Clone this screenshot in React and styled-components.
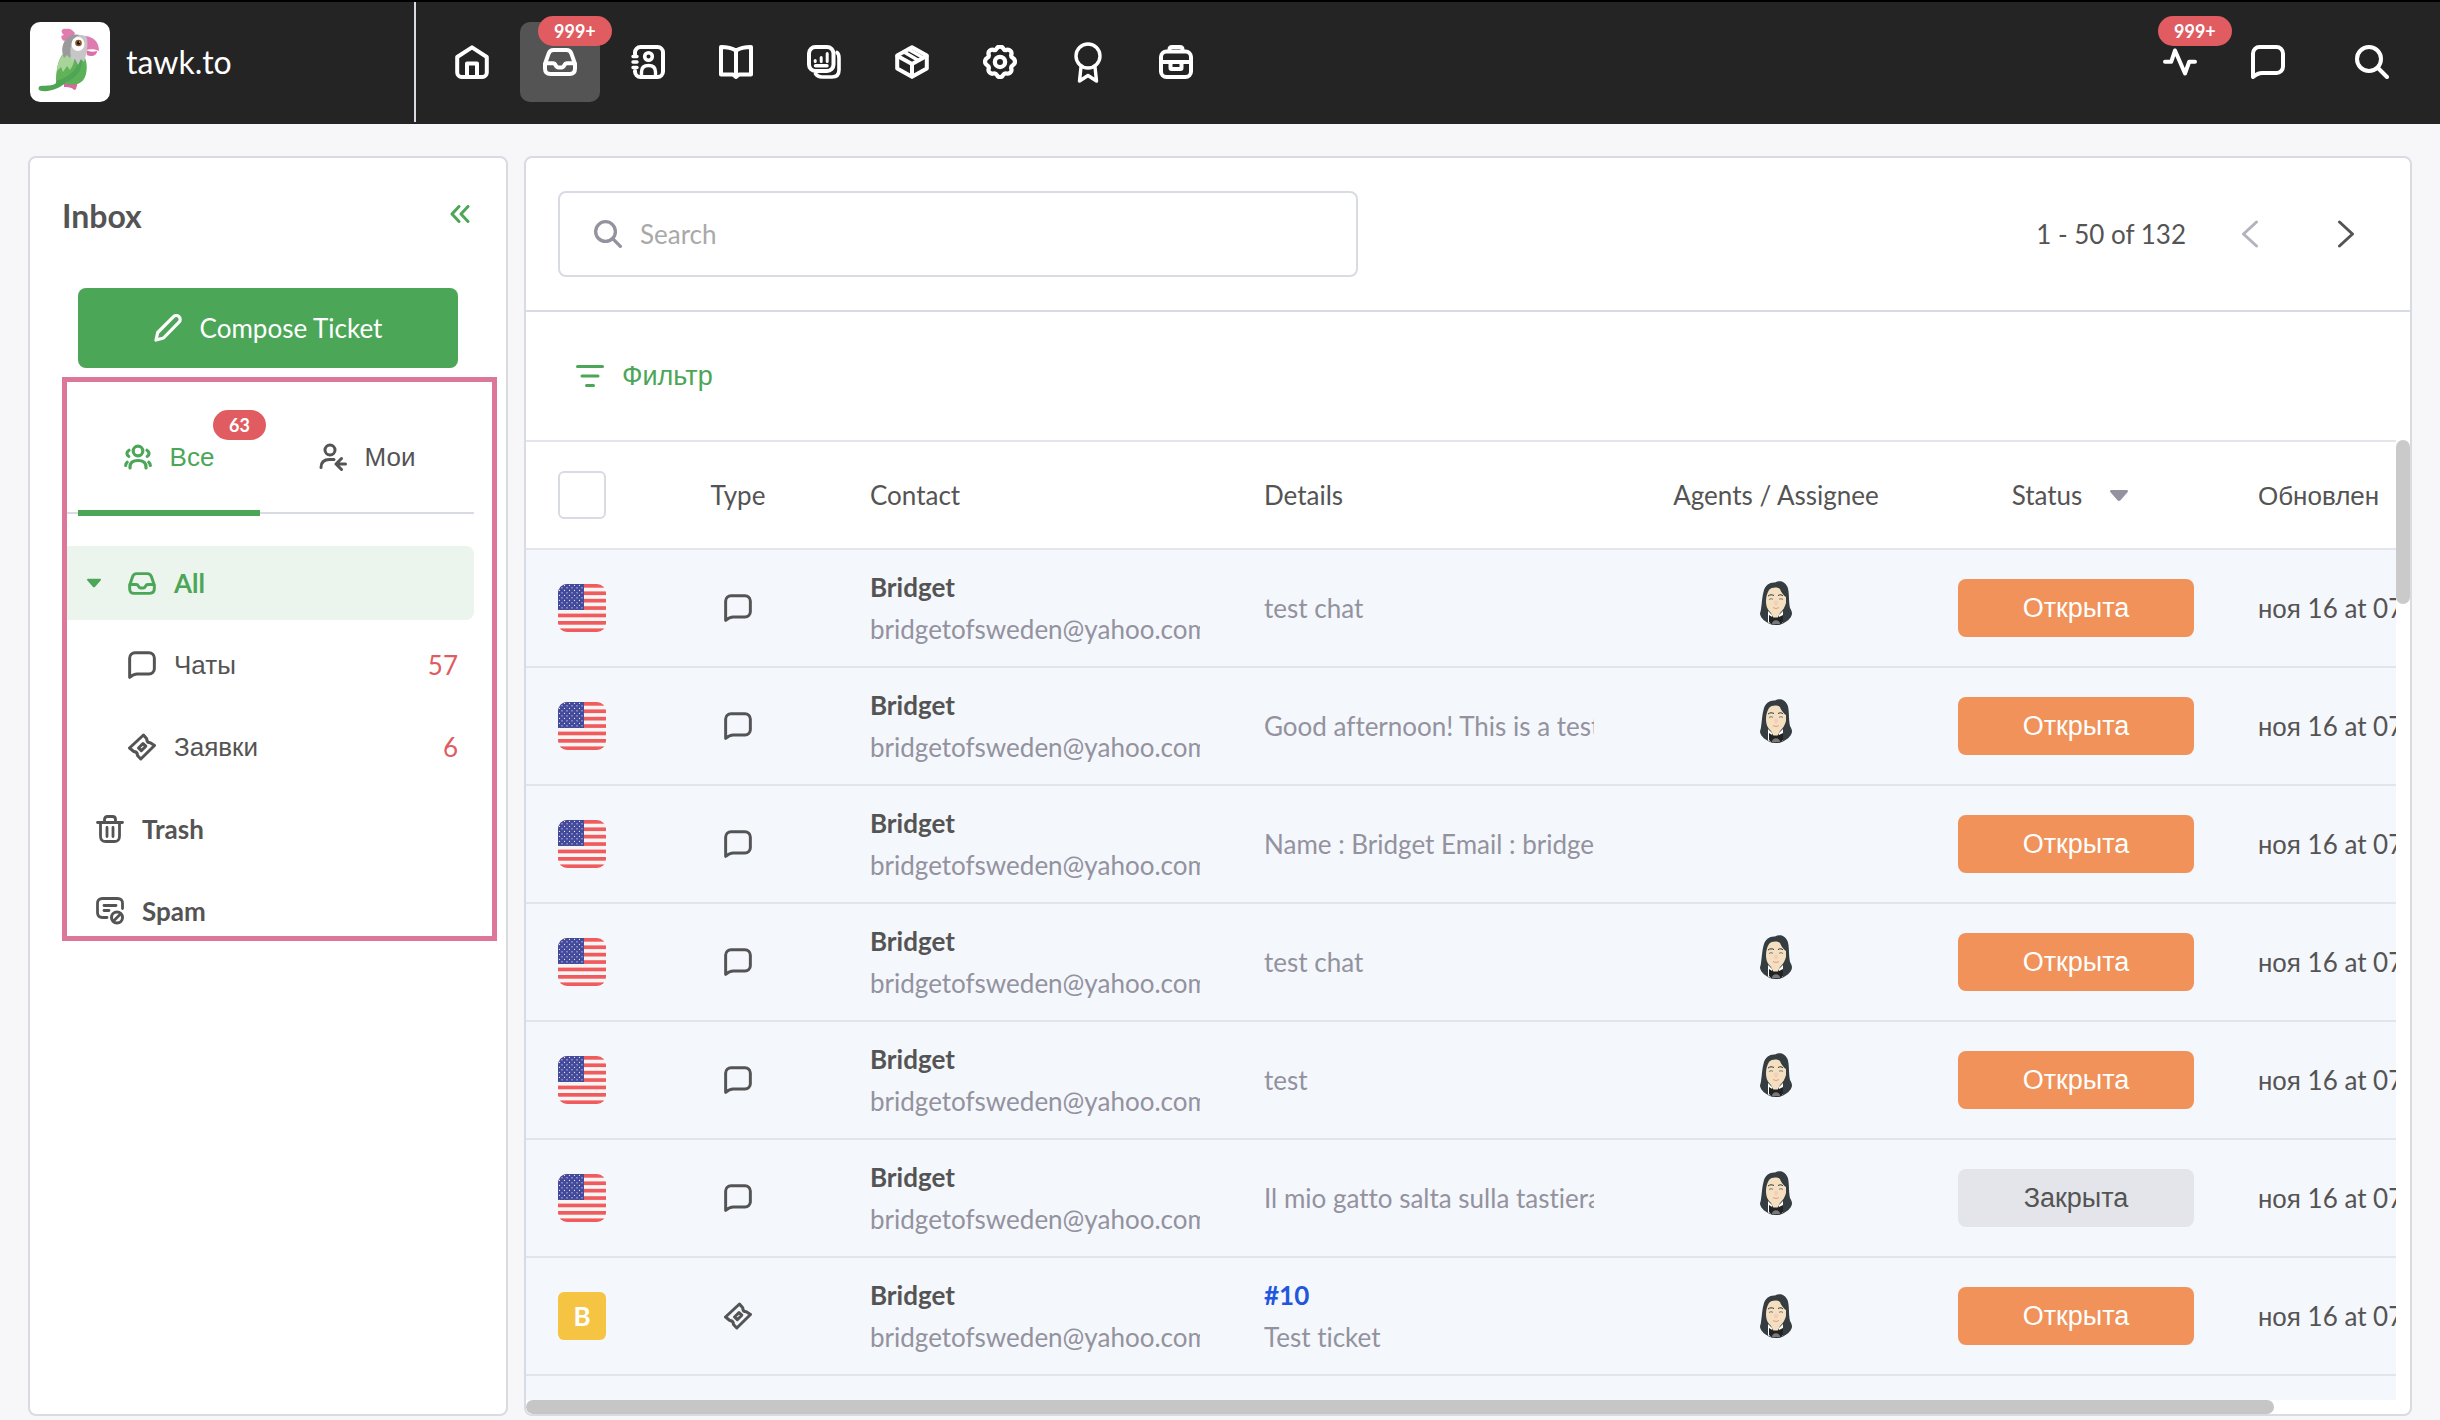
import React from "react";
import styled, { createGlobalStyle } from "styled-components";

const GlobalStyle = createGlobalStyle`
  * {
    box-sizing: border-box;
  }

  body {
    margin: 0;
    background: #f7f7fa;
    color: #545454;
    font-family: Lato, "Liberation Sans", sans-serif;
    font-size: 26px;
    font-variant-ligatures: none;
    line-height: 42px;
  }

  button {
    border: 0;
    padding: 0;
    background: none;
    color: inherit;
    font: inherit;
    cursor: pointer;
  }
`;

/* ---------- icons ---------- */

const Svg = styled.svg`
  display: block;
  flex: none;
  fill: none;
  stroke: currentColor;
  stroke-linecap: round;
  stroke-linejoin: round;
`;

const Icon = ({ w = 34, h = 34, size = w, stroke = 4, children }) => (
  <Svg
    width={size}
    height={Math.round((size * h) / w)}
    viewBox={`0 0 ${w} ${h}`}
    strokeWidth={stroke}
    aria-hidden="true"
  >
    {children}
  </Svg>
);

const HomeIcon = () => (
  <Icon>
    <path d="M17 2.4 31.8 12v15.500a4.500 4.500 0 0 1-4.500 4.500H6.700a4.500 4.500 0 0 1-4.500-4.500V12z" />
    <path d="M12 31V18.500h10V31" />
  </Icon>
);

const InboxIcon = ({ size, stroke }) => (
  <Icon w={34} h={28} size={size} stroke={stroke}>
    <path d="M2 16 5.600 5.600C6.500 3 8 2 10.500 2h13c2.500 0 4 1 4.900 3.600L32 16v4.500c0 3.800-1.700 5.500-5.500 5.500h-19C3.700 26 2 24.300 2 20.500z" />
    <path d="M2.500 15.200H10c1.500 0 2 .6 2.600 1.900.8 1.700 1.400 2.300 2.900 2.300h3c1.500 0 2.100-.6 2.900-2.300.6-1.300 1.100-1.900 2.600-1.900h7.500" />
  </Icon>
);

const ContactsIcon = () => (
  <Icon>
    <path d="M4 9V7.500A5.500 5.500 0 0 1 9.500 2h17A5.500 5.500 0 0 1 32 7.500v19a5.500 5.500 0 0 1-5.500 5.500h-17A5.500 5.500 0 0 1 4 26.500V26" />
    <path d="M2 11.500h4M2 17h4M2 22.500h4" strokeWidth="3.400" />
    <circle cx="17.500" cy="11.500" r="3.800" strokeWidth="3.600" />
    <path d="M10.500 29.500v-2.500c0-4 2.500-6.500 7-6.500s7 2.500 7 6.500v2.500" strokeWidth="3.400" />
  </Icon>
);

const BookIcon = () => (
  <Icon>
    <path d="M17 5.500C13 3 8 2 2 2v27.500h12l3 2.500 3-2.500h12V2C26 2 21 3 17 5.500V31" />
  </Icon>
);

const ReportsIcon = () => (
  <Icon>
    <rect x="2" y="2" width="24.500" height="24" rx="6.500" />
    <path d="M30 7.500c1.400 1 2 3 2 5.500v12c0 4.700-2.300 7-7 7H15c-3 0-5-1-6.500-3.200" strokeWidth="3.600" />
    <path d="M8.200 15.500v1M14.200 12.500v4M20.200 8.500v8" strokeWidth="3" />
    <path d="M8.500 20.800h11.500" strokeWidth="3.400" />
  </Icon>
);

const BoxIcon = () => (
  <Icon>
    <path d="M17 2.200 31.800 10.500v13L17 31.800 2.200 23.500v-13z" />
    <path d="M2.500 11 17 19l14.500-8M17 19v12.500" />
    <path d="M9 7l14 8.300M13.500 4.200l14 8.200" strokeWidth="3.400" />
  </Icon>
);

const GearIcon = () => (
  <Icon>
    <g transform="translate(-1.200 -1) scale(1.070)">
      <path d="M14 4.200c1.300-2.500 4.700-2.500 6 0 .7 1.300 1.800 1.700 3.200 1.300 2.700-.8 5.200 1.600 4.400 4.300-.4 1.400 0 2.500 1.300 3.200 2.800 1.500 2.800 5.500 0 7-1.300.7-1.700 1.800-1.300 3.200.8 2.700-1.700 5.200-4.400 4.400-1.400-.4-2.500 0-3.200 1.300-1.300 2.800-4.700 2.800-6 0-.7-1.300-1.800-1.700-3.200-1.300-2.700.8-5.200-1.700-4.400-4.400.4-1.400 0-2.500-1.300-3.200-2.800-1.500-2.800-5.500 0-7 1.300-.7 1.700-1.800 1.300-3.200-.8-2.700 1.700-5.100 4.400-4.300 1.400.4 2.500 0 3.200-1.300z" />
      <circle cx="17" cy="16.800" r="4.800" />
    </g>
  </Icon>
);

const RibbonIcon = () => (
  <Icon w={28} h={42} stroke={3.4}>
    <circle cx="14" cy="15" r="12" />
    <path d="M7 26 5.500 40l8.500-5.500 8.500 5.500L21 26" />
  </Icon>
);

const CaseIcon = () => (
  <Icon>
    <rect x="2" y="6.500" width="30" height="25.500" rx="5.500" />
    <path d="M10.500 6V4.500c0-1.700.8-2.500 2.500-2.500h8c1.700 0 2.500.8 2.500 2.500V6" />
    <path d="M3 17h28M11.500 17.500v5.500c0 .7.300 1 1 1h9c.7 0 1-.3 1-1v-5.500" />
  </Icon>
);

const ActivityIcon = () => (
  <Icon w={34} h={28}>
    <path d="M2 13.800h6.200L12 2.500l10 23 4.200-11.700H32" />
  </Icon>
);

const ChatIcon = ({ size, stroke }) => (
  <Icon size={size} stroke={stroke}>
    <path d="M2 32V8.500A6.500 6.500 0 0 1 8.500 2h17A6.500 6.500 0 0 1 32 8.500v13a6.500 6.500 0 0 1-6.500 6.500H11c-3.800 0-6 1.500-9 4z" />
  </Icon>
);

const SearchIcon = ({ size, stroke }) => (
  <Icon size={size} stroke={stroke}>
    <circle cx="14" cy="14" r="12" />
    <path d="m23 23 9 9" />
  </Icon>
);

const CollapseIcon = () => (
  <Icon w={20} h={18} stroke={3}>
    <path d="M9 1.500 2 9l7 7.500M18 1.500 11 9l7 7.500" />
  </Icon>
);

const PencilIcon = () => (
  <Icon w={28} h={28} stroke={3.2}>
    <path d="M2 26l1.700-7.500L19.500 2.700a3.800 3.800 0 0 1 5.500 0 3.800 3.800 0 0 1 0 5.500L9.500 24z" />
  </Icon>
);

const UsersIcon = () => (
  <Icon w={28} h={26} stroke={3.2}>
    <circle cx="14" cy="7" r="4.800" />
    <path d="M6 24v-1c0-4 2.800-6.500 8-6.500s8 2.500 8 6.500v1" />
    <path d="M5 6.300c-2.700 1.500-2.700 4.700-.2 6M23 6.300c2.700 1.500 2.700 4.700.2 6M3.200 18.200c-1 .8-1.500 2-1.500 3.300M24.800 18.200c1 .8 1.500 2 1.500 3.300" />
  </Icon>
);

const UserArrowIcon = () => (
  <Icon w={28} h={28} stroke={3}>
    <circle cx="11" cy="7" r="5" />
    <path d="M2 24.500c0-5.500 3-8 8.500-8h4.500" />
    <path d="M26.500 21H17M22.500 15.500 17 21l5.500 5.500" />
  </Icon>
);

const TicketIcon = () => (
  <Icon w={28} h={28} stroke={3}>
    <path d="M15.500 2l3.200 3.700c0 2.800.9 4 3.600 4l4.200 2.800L12.800 26l-3.300-3.500c0-2.800-1-4-3.700-4L1.500 15z" />
    <path d="m10.500 15 4.500-4.500 2.800 2.700-4.500 4.500z" />
  </Icon>
);

const TrashIcon = () => (
  <Icon w={28} h={28} stroke={2.8}>
    <path d="M1.500 7.500h25M8.500 7V4.500c0-2 1-3 3-3h5c2 0 3 1 3 3V7M4.500 8v13c0 4 1.500 5.500 5.500 5.500h8c4 0 5.500-1.500 5.500-5.500V8M11 12.500v9M17 12.500v9" />
  </Icon>
);

const SpamIcon = () => (
  <Icon w={28} h={28} stroke={2.8}>
    <path d="M26.500 11.500V6.500c0-3.300-1.700-5-5-5h-15c-3.300 0-5 1.700-5 5v9c0 3.300 1.700 5 5 5h4.500M8 8.500h12M8 13.500h5" />
    <circle cx="21" cy="20.500" r="5.500" strokeWidth="3" />
    <path d="m17.500 24 7-7" />
  </Icon>
);

const FilterIcon = () => (
  <Icon w={28} h={24} stroke={3}>
    <path d="M1.500 2.500h25M6 12h16M10.500 21.500h7" />
  </Icon>
);

const ChevronIcon = ({ right }) => (
  <Icon w={18} h={28} stroke={3}>
    <path d={right ? "M2.500 2 15.500 14l-13 12" : "M15.500 2 2.500 14l13 12"} />
  </Icon>
);

const Triangle = ({ w, h }) => (
  <svg width={w} height={h} viewBox="0 0 18 11" aria-hidden="true">
    <path d="M1.500 0h15c1.300 0 1.900 1.200 1 2.200l-7 8c-.9 1-2.100 1-3 0l-7-8C-.4 1.200.2 0 1.500 0z" fill="currentColor" />
  </svg>
);

const Parrot = () => (
  <svg width="80" height="80" viewBox="0 0 80 80" role="img" aria-label="parrot">
    <path d="M42 17c-3 0-6 1-8 2-3-2-4-6 0-6-5-4-1-7 2-6 3-1 6 0 9 4z" fill="#e27bb0" />
    <path d="M34 62c2-2 6-1 10 0 2-1 4 0 3 2-1 1 0 4-3 4-2-3-7-3-10-3z" fill="#d9689f" />
    <path d="M53 32c4 6 5 15 2 23-3 7-10 9-19 7l4-28z" fill="#5cb058" />
    <path d="M35 31c-7 8-8 18-9 30-4 4-13 2-16 3-3 2-1 5 2 5 10 1 19-4 25-9 9-5 14-10 15-20l-4-9z" fill="#4fa554" />
    <path d="M32 33c-4 6-6 15-6 26 10-3 17-8 21-15l-3-13z" fill="#62b25a" />
    <path d="M33 32c-4 6-6 11-6 17l4-4 2 5 4-6 3 4c4-6 5-10 4-18z" fill="#a8d49a" />
    <path d="M34 36c-4-9-1-18 6-22 7-3 12-1 15 4l-9 3-6 15-3-3z" fill="#999a99" />
    <path d="M55 14c9 1 14 6 14 15-4-2-8-2-14-1z" fill="#e07bb0" />
    <path d="M56 28c4 2 7 2 11 1 0 5-6 6-10 4z" fill="#dc6ea5" />
    <path d="M57 16c1 6 0 12-1 17l-2 7-3-3-3 6-3-6-3 2c-3-9-2-19 5-25 4-2 8-1 10 2z" fill="#c6c6c8" />
    <ellipse cx="48" cy="22" rx="6.500" ry="7" fill="#fff" />
    <circle cx="48.500" cy="21" r="3.300" fill="#8a5524" />
    <circle cx="48.500" cy="21" r="1.700" fill="#1d1510" />
    <circle cx="49.500" cy="20" r=".6" fill="#fff" />
  </svg>
);

const AgentAvatar = () => (
  <svg width="32" height="44" viewBox="0 0 32 44" role="img" aria-label="Agent">
    <path d="M15 1.500C19-1 25 0 27.500 6c2 5 1 14 2.500 21 1 2 2 3 2 6-1 5-6 8-10 10-4 1.500-9 1-12 0-4-2-9-5-10-10 0-2 1-3 1-5 1-6 1-13 3-19 1.500-5 6-8 11-7.500z" fill="#353d41" />
    <path d="M9 9c3-3 8-3 11-1 1 3 4 7 6 8v6c-1 4-3 7-6 10l-3 6h-3l-3-6c-3-3-5-6-5-12 0-4 1-8 3-11z" fill="#f4dfc0" />
    <path d="M8 30l4 4v9l-4-1.500zM23 30l-4 4v9l4-1.500z" fill="#fff" />
    <path d="M9 34l4 2.500h5l5-2.500v7l-3 2.500h-8L9 41z" fill="#222" />
    <path d="M12 43c0-5 8-5 8 0z" fill="#77797b" />
    <path d="M8 15c2-1.500 4-1.500 6-.5M18 14.500c2-1 4-1 5 .5" stroke="#2e3437" strokeWidth="1" fill="none" />
    <path d="M9 18.500c1.500-1 3-1 4 0M19 18.500c1-1 2.500-1 4 0" stroke="#6e7477" strokeWidth="1" fill="none" />
    <ellipse cx="16" cy="22" rx="2" ry="2.600" fill="#f6cdb4" />
    <path d="M13 26.500c2 1.200 4 1.200 6 0" stroke="#dc9a86" strokeWidth="1" fill="none" />
  </svg>
);

const UsFlag = () => (
  <svg width="48" height="48" viewBox="0 0 48 48" role="img" aria-label="United States">
    <defs>
      <clipPath id="flagShape">
        <rect width="48" height="48" rx="9" />
      </clipPath>
      <pattern id="flagStars" width="5" height="5" patternUnits="userSpaceOnUse">
        <circle cx="1.500" cy="1.300" r=".6" fill="#fff" />
        <circle cx="4" cy="3.800" r=".6" fill="#fff" />
      </pattern>
    </defs>
    <g clipPath="url(#flagShape)">
      <rect width="48" height="48" fill="#f5f5f5" />
      {[0, 1, 2, 3, 4, 5, 6].map(n => (
        <rect key={n} y={n * 7.4} width="48" height="3.700" fill="#f05c5e" />
      ))}
      <rect width="26" height="26" fill="#434a9b" />
      <rect width="26" height="26" fill="url(#flagStars)" />
    </g>
  </svg>
);

/* ---------- data ---------- */

const navItems = [
  { name: "Home", icon: <HomeIcon /> },
  { name: "Inbox", icon: <InboxIcon />, active: true, badge: "999+" },
  { name: "Contacts", icon: <ContactsIcon /> },
  { name: "Knowledge Base", icon: <BookIcon /> },
  { name: "Reports", icon: <ReportsIcon /> },
  { name: "Add-ons", icon: <BoxIcon /> },
  { name: "Administration", icon: <GearIcon /> },
  { name: "Rewards", icon: <RibbonIcon /> },
  { name: "Jobs", icon: <CaseIcon /> }
];

const tickets = [
  { details: "test chat", agent: true },
  { details: "Good afternoon! This is a test", agent: true },
  { details: "Name : Bridget Email : bridget", agent: false },
  { details: "test chat", agent: true },
  { details: "test", agent: true },
  { details: "Il mio gatto salta sulla tastiera", agent: true, closed: true },
  { number: "#10", details: "Test ticket", agent: true }
];

/* ---------- page ---------- */

export default class App extends React.Component {
  constructor(props) {
    super(props);

    this.selectTab = this.selectTab.bind(this);
    this.state = {
      tab: "all"
    };
  }

  selectTab(tab) {
    this.setState({ tab });
  }

  render() {
    const { tab } = this.state;

    return (
      <Page>
        <GlobalStyle />
        <TopBar>
          <Brand href="#home">
            <Logo>
              <Parrot />
            </Logo>
            tawk.to
          </Brand>
          <TopNav>
            {navItems.map(item => (
              <NavButton key={item.name} aria-label={item.name} $active={item.active}>
                {item.icon}
                {item.badge && <NavBadge>{item.badge}</NavBadge>}
              </NavButton>
            ))}
          </TopNav>
          <TopActions>
            <NavButton aria-label="Activity">
              <ActivityIcon />
              <NavBadge>999+</NavBadge>
            </NavButton>
            <NavButton aria-label="Chats">
              <ChatIcon />
            </NavButton>
            <SearchButton aria-label="Search">
              <SearchIcon />
            </SearchButton>
          </TopActions>
        </TopBar>

        <Content>
          <Sidebar>
            <SidebarHeader>
              <Title>Inbox</Title>
              <CollapseButton aria-label="Collapse">
                <CollapseIcon />
              </CollapseButton>
            </SidebarHeader>
            <ComposeButton>
              <PencilIcon />
              Compose Ticket
            </ComposeButton>

            <Folders>
              <Tabs role="tablist">
                <Tab role="tab" $active={tab === "all"} onClick={() => this.selectTab("all")}>
                  <UsersIcon />
                  <Ru>Все</Ru>
                  <TabBadge>63</TabBadge>
                </Tab>
                <Tab role="tab" $active={tab === "mine"} onClick={() => this.selectTab("mine")}>
                  <UserArrowIcon />
                  <Ru>Мои</Ru>
                </Tab>
              </Tabs>
              <FolderList>
                <Folder href="#all" $pad={25} $active $bold>
                  <Caret>
                    <Triangle w={14} h={10} />
                  </Caret>
                  <InboxIcon size={28} stroke={3.6} />
                  All
                </Folder>
                <Folder href="#chats" $pad={66}>
                  <ChatIcon size={28} stroke={3.6} />
                  <Ru>Чаты</Ru>
                  <Count>57</Count>
                </Folder>
                <Folder href="#tickets" $pad={66}>
                  <TicketIcon />
                  <Ru>Заявки</Ru>
                  <Count>6</Count>
                </Folder>
                <Folder href="#trash" $pad={34} $bold>
                  <TrashIcon />
                  Trash
                </Folder>
                <Folder href="#spam" $pad={34} $bold>
                  <SpamIcon />
                  Spam
                </Folder>
              </FolderList>
            </Folders>
          </Sidebar>

          <Main>
            <Toolbar>
              <SearchBox>
                <SearchIcon size={28} stroke={4} />
                <SearchInput type="text" placeholder="Search" aria-label="Search" />
              </SearchBox>
              <Pager>
                <PageRange>1 - 50 of 132</PageRange>
                <PageButton aria-label="Previous page" disabled>
                  <ChevronIcon />
                </PageButton>
                <PageButton aria-label="Next page">
                  <ChevronIcon right />
                </PageButton>
              </Pager>
            </Toolbar>

            <FilterBar>
              <FilterButton>
                <FilterIcon />
                <Ru>Фильтр</Ru>
              </FilterButton>
            </FilterBar>

            <TableArea>
              <TableScroll>
                <Table>
                  <colgroup>
                    <Col $w={112} />
                    <Col $w={200} />
                    <Col $w={394} />
                    <Col $w={394} />
                    <Col $w={300} />
                    <Col $w={300} />
                    <Col $w={300} />
                  </colgroup>
                  <thead>
                    <tr>
                      <Th>
                        <Checkbox type="checkbox" aria-label="Select all" />
                      </Th>
                      <Th $center>Type</Th>
                      <Th>Contact</Th>
                      <Th>Details</Th>
                      <Th $center>Agents / Assignee</Th>
                      <Th>
                        <SortButton>
                          Status
                          <Triangle w={18} h={11} />
                        </SortButton>
                      </Th>
                      <Th>
                        <Ru>Обновлен</Ru>
                      </Th>
                    </tr>
                  </thead>
                  <tbody>
                    {tickets.map((ticket, i) => (
                      <tr key={i}>
                        <Td>{ticket.number ? <Initial>B</Initial> : <Centered><UsFlag /></Centered>}</Td>
                        <Td>
                          <Centered>
                            {ticket.number ? <TicketIcon /> : <ChatIcon size={28} stroke={3.6} />}
                          </Centered>
                        </Td>
                        <Td>
                          <Name>Bridget</Name>
                          <Muted>bridgetofsweden@yahoo.com</Muted>
                        </Td>
                        <Td>
                          {ticket.number && <TicketLink href="#ticket">{ticket.number}</TicketLink>}
                          <Muted>{ticket.details}</Muted>
                        </Td>
                        <Td>
                          <Agent $raised={!ticket.number}>{ticket.agent && <AgentAvatar />}</Agent>
                        </Td>
                        <Td>
                          <Status $closed={ticket.closed}>{ticket.closed ? "Закрыта" : "Открыта"}</Status>
                        </Td>
                        <Td>
                          <Ru>ноя</Ru> 16 at 07
                        </Td>
                      </tr>
                    ))}
                  </tbody>
                </Table>
              </TableScroll>
              <VerticalTrack>
                <VerticalThumb />
              </VerticalTrack>
              <HorizontalTrack>
                <HorizontalThumb />
              </HorizontalTrack>
            </TableArea>
          </Main>
        </Content>
      </Page>
    );
  }
}

/* ---------- layout ---------- */

const Page = styled.div`
  display: flex;
  flex-direction: column;
  height: 100vh;
  overflow: hidden;
`;

const Ru = styled.span`
  font-family: "Liberation Sans", sans-serif;
`;

const TopBar = styled.header`
  display: flex;
  flex: none;
  height: 124px;
  border-top: 2px solid #000;
  padding-bottom: 2px;
  background: #242424;
  color: #fff;
`;

const Brand = styled.a`
  display: flex;
  align-items: center;
  gap: 16px;
  width: 416px;
  padding-left: 30px;
  border-right: 2px solid #d9dbe4;
  color: #fff;
  font-size: 32px;
  text-decoration: none;
`;

const Logo = styled.span`
  width: 80px;
  height: 80px;
  border-radius: 10px;
  background: #fff;
`;

const TopNav = styled.nav`
  display: flex;
  align-items: center;
  gap: 8px;
  padding-left: 16px;
`;

const TopActions = styled.div`
  display: flex;
  align-items: center;
  gap: 8px;
  margin-left: auto;
  padding-right: 28px;
`;

const NavButton = styled.button`
  position: relative;
  display: flex;
  align-items: center;
  justify-content: center;
  width: 80px;
  height: 80px;
  border-radius: 10px;
  ${props => props.$active && "background: #545454;"}
`;

const SearchButton = styled(NavButton)`
  margin-left: 16px;
`;

const Badge = styled.span`
  position: absolute;
  height: 30px;
  padding: 0 16px;
  border-radius: 15px;
  background: #e05c60;
  color: #fff;
  font-size: 18px;
  font-weight: 700;
  line-height: 30px;
`;

const NavBadge = styled(Badge)`
  top: -6px;
  left: 18px;
`;

const TabBadge = styled(Badge)`
  top: 7px;
  right: -6px;
`;

const Content = styled.div`
  display: flex;
  flex: 1;
  gap: 16px;
  min-height: 0;
  padding: 32px 28px 4px;
`;

const Sidebar = styled.aside`
  flex: none;
  width: 480px;
  border: 2px solid #d9dbe4;
  border-radius: 8px;
  background: #fff;
`;

const SidebarHeader = styled.div`
  display: flex;
  align-items: center;
  justify-content: space-between;
  padding: 40px 36px 54px 32px;
`;

const Title = styled.h1`
  margin: 0;
  font-size: 32px;
  font-weight: 700;
  line-height: 36px;
`;

const CollapseButton = styled.button`
  padding-bottom: 4px;
  color: #4ca657;
`;

const ComposeButton = styled.button`
  display: flex;
  align-items: center;
  justify-content: center;
  gap: 18px;
  width: 380px;
  height: 80px;
  margin: 0 48px;
  border-radius: 8px;
  background: #4ca657;
  color: #fff;
`;

const Folders = styled.div`
  position: relative;
  margin: 9px 9px 0 32px;

  &::after {
    content: "";
    position: absolute;
    inset: 0 0 7px;
    border: 5px solid #dc7799;
    pointer-events: none;
  }
`;

const Tabs = styled.div`
  display: flex;
  gap: 16px;
  margin-right: 23px;
  padding: 26px 16px 0;
  border-bottom: 2px solid #d9dbe4;
`;

const Tab = styled.button`
  position: relative;
  display: flex;
  flex: 1;
  align-items: center;
  justify-content: center;
  gap: 18px;
  height: 113px;
  margin-bottom: -4px;
  border-bottom: 6px solid ${props => (props.$active ? "#4ca657" : "transparent")};
  color: ${props => (props.$active ? "#4ca657" : "#545454")};
`;

const FolderList = styled.nav`
  display: flex;
  flex-direction: column;
  gap: 8px;
  margin: 32px 23px 0 0;
`;

const Folder = styled.a`
  display: flex;
  align-items: center;
  gap: 18px;
  height: 74px;
  padding: 0 16px 0 ${props => props.$pad}px;
  border-radius: 8px;
  background: ${props => (props.$active ? "#ecf5ed" : "transparent")};
  color: ${props => (props.$active ? "#4ca657" : "#545454")};
  font-weight: ${props => (props.$bold ? 700 : 400)};
  text-decoration: none;
`;

const Caret = styled.span`
  display: flex;
  margin-right: 9px;
`;

const Count = styled.span`
  margin-left: auto;
  color: #e05c60;
`;

const Main = styled.main`
  display: flex;
  flex: 1;
  flex-direction: column;
  min-width: 0;
  overflow: hidden;
  border: 2px solid #d9dbe4;
  border-radius: 8px;
  background: #fff;
`;

const Toolbar = styled.div`
  display: flex;
  flex: none;
  align-items: center;
  justify-content: space-between;
  height: 154px;
  padding: 0 40px 0 32px;
  border-bottom: 2px solid #d9dbe4;
`;

const SearchBox = styled.label`
  display: flex;
  flex: 0 1 800px;
  align-items: center;
  gap: 18px;
  height: 86px;
  padding: 0 34px;
  border: 2px solid #d9dbe4;
  border-radius: 8px;
  color: #93929e;
`;

const SearchInput = styled.input`
  flex: 1;
  min-width: 0;
  padding: 0;
  border: 0;
  outline: 0;
  background: none;
  color: #545454;
  font: inherit;

  &::placeholder {
    color: #a9a9a9;
  }
`;

const Pager = styled.div`
  display: flex;
  align-items: center;
  gap: 48px;
`;

const PageRange = styled.span`
  margin-right: -8px;
`;

const PageButton = styled.button`
  display: flex;
  align-items: center;
  justify-content: center;
  width: 48px;
  height: 48px;

  &:disabled {
    color: #b4b3bb;
  }
`;

const FilterBar = styled.div`
  display: flex;
  flex: none;
  align-items: center;
  height: 128px;
  padding: 0 50px;
`;

const FilterButton = styled.button`
  display: flex;
  align-items: center;
  gap: 18px;
  color: #4ca657;
  font-size: 27px;
`;

/* ---------- table ---------- */

const TableArea = styled.div`
  display: grid;
  flex: 1;
  grid-template-columns: minmax(0, 1fr) 14px;
  grid-template-rows: minmax(0, 1fr) 14px;
  min-height: 0;
`;

const TableScroll = styled.div`
  overflow: auto;
  scrollbar-width: none;
  background: #f4f7fc;
`;

const VerticalTrack = styled.div`
  background: #fff;
`;

const VerticalThumb = styled.div`
  height: 164px;
  border-radius: 7px;
  background: #cacaca;
`;

const HorizontalTrack = styled.div`
  background: #fff;
`;

const HorizontalThumb = styled.div`
  width: 93.5%;
  height: 14px;
  border-radius: 7px;
  background: #c6c6c6;
`;

const Table = styled.table`
  width: 2000px;
  table-layout: fixed;
  border-collapse: separate;
  border-spacing: 0;
  border-top: 2px solid #e4e5ea;
`;

const Col = styled.col`
  width: ${props => props.$w}px;
`;

const Th = styled.th`
  height: 108px;
  padding: 0 32px;
  border-bottom: 2px solid #e4e5ea;
  background: #fff;
  font-weight: 400;
  text-align: ${props => (props.$center ? "center" : "left")};
  white-space: nowrap;
`;

const Td = styled.td`
  height: 118px;
  padding: 0 32px;
  border-bottom: 2px solid #e4e5ea;
  white-space: nowrap;
`;

const Checkbox = styled.input`
  display: block;
  width: 48px;
  height: 48px;
  margin: 0;
  appearance: none;
  border: 2px solid #d9dbe4;
  border-radius: 6px;
  background: #fff;
`;

const SortButton = styled.button`
  display: flex;
  align-items: center;
  justify-content: center;
  gap: 28px;
  width: 100%;
  padding-right: 12px;

  svg {
    color: #93929e;
  }
`;

const Centered = styled.div`
  display: flex;
  justify-content: center;
`;

const Initial = styled.div`
  width: 48px;
  height: 48px;
  border-radius: 6px;
  background: #f5c443;
  color: #fff;
  font-weight: 700;
  line-height: 48px;
  text-align: center;
`;

const Name = styled.div`
  font-weight: 700;
`;

const Muted = styled.div`
  overflow: hidden;
  color: #93929e;
`;

const TicketLink = styled.a`
  display: block;
  color: #2257dd;
  font-weight: 700;
  text-decoration: none;
`;

const Agent = styled(Centered)`
  padding-bottom: ${props => (props.$raised ? 10 : 0)}px;
`;

const Status = styled.button`
  display: block;
  width: 100%;
  height: 58px;
  border-radius: 8px;
  background: ${props => (props.$closed ? "#e4e5ea" : "#f09259")};
  color: ${props => (props.$closed ? "#545454" : "#fff")};
  font-family: "Liberation Sans", sans-serif;
  font-size: 27px;
`;
